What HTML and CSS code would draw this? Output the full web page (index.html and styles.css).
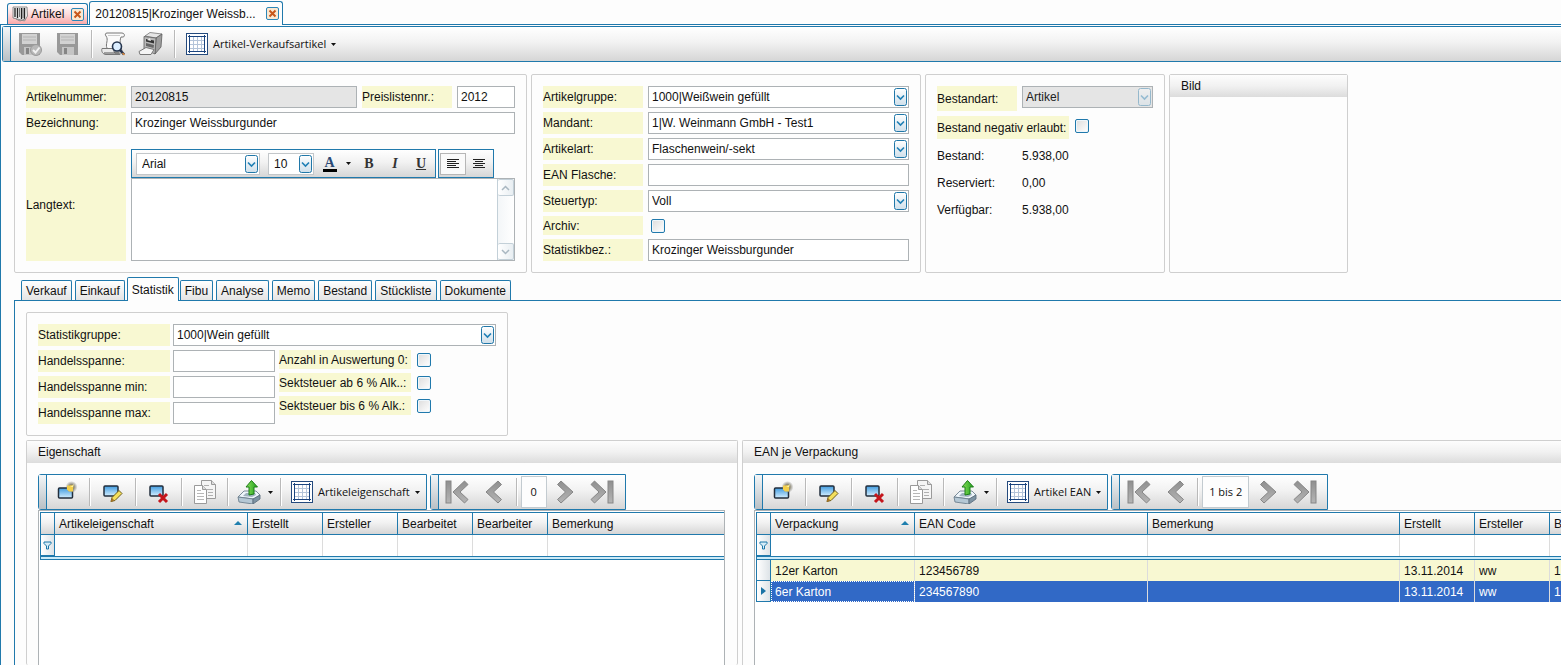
FILE: index.html
```html
<!DOCTYPE html>
<html lang="de">
<head>
<meta charset="utf-8">
<title>Artikel</title>
<link rel="stylesheet" href="styles.css">
</head>
<body>
<svg class="defs" aria-hidden="true">
  <defs>
    <linearGradient id="g-grey" x1="0" y1="0" x2="0" y2="1"><stop offset="0" stop-color="#8f8f8f"/><stop offset="1" stop-color="#b5b5b5"/></linearGradient>
    <linearGradient id="g-blue" x1="0" y1="0" x2="0" y2="1"><stop offset="0" stop-color="#3f9be0"/><stop offset="1" stop-color="#d5efff"/></linearGradient>
    <linearGradient id="g-green" x1="0" y1="0" x2="1" y2="0"><stop offset="0" stop-color="#8be05a"/><stop offset="1" stop-color="#1fa01c"/></linearGradient>
    <linearGradient id="g-btn" x1="0" y1="0" x2="0" y2="1"><stop offset="0" stop-color="#fff"/><stop offset="1" stop-color="#cfdfea"/></linearGradient>
    <radialGradient id="g-glow"><stop offset="0" stop-color="#ffd84a"/><stop offset="0.4" stop-color="#8f8a70"/><stop offset="1" stop-color="#888" stop-opacity="0"/></radialGradient>
  </defs>
  <symbol id="i-drop" viewBox="0 0 13 18"><rect x=".5" y=".5" width="12" height="17" rx="2" fill="url(#g-btn)" stroke="#2077a8"/><path d="M3 7.500l3.500 3.500L10 7.500" fill="none" stroke="#1f7fb5" stroke-width="1.600"/></symbol>
  <symbol id="i-close" viewBox="0 0 13 13"><rect x=".5" y=".5" width="12" height="12" rx="1.500" fill="#fbe9d2" stroke="#2c86b8"/><path d="M3.500 3.500l6 6M9.500 3.500l-6 6" stroke="#c8571a" stroke-width="2"/></symbol>
  <symbol id="i-barcode" viewBox="0 0 16 16"><path d="M1 1h14l.5 9-3 5-3-1L1 12z" fill="#eee" stroke="#777" stroke-width=".8"/><path d="M3 2v9M5.500 2v10M9.500 2v11M12.500 2v11" stroke="#222" stroke-width="1.300"/><path d="M7.500 2v9M11 2v10" stroke="#444" stroke-width=".7"/><path d="M4 13l4 2 5-2" fill="none" stroke="#888"/></symbol>
  <symbol id="i-disk" viewBox="0 0 24 24"><path d="M1 1h21v22H4l-3-3z" fill="#999"/><rect x="4" y="2" width="15" height="10" fill="#d2d2d2"/><path d="M5 5h13M5 8h13" stroke="#b4b4b4"/><rect x="6" y="15" width="12" height="8" fill="#c4c4c4"/><rect x="8" y="16" width="3" height="6" fill="#858585"/></symbol>
  <symbol id="i-diskok" viewBox="0 0 24 24"><use href="#i-disk"/><circle cx="18" cy="18" r="5.500" fill="#b8b8b8" stroke="#9a9a9a"/><path d="M15 18l2.500 2.500 4-5" fill="none" stroke="#f2f2f2" stroke-width="2"/></symbol>
  <symbol id="i-preview" viewBox="0 0 26 24"><path d="M7 1h15c3 0 3 4 1 4h-2c-2 5 0 10 1 14H6l1-3C5 12 9 8 6 4 5 3 5 1 7 1z" fill="#fafafa" stroke="#777"/><path d="M8 3.500h12" stroke="#ccc"/><path d="M2 16.500h12c-1 2 0 3 1 4.500h5v1.500H6c-3 0-5-3-4-6z" fill="#e9e9e9" stroke="#777"/><path d="M4 21h15" stroke="#555"/><circle cx="17" cy="14.500" r="4.500" fill="#dceeff" stroke="#26364f" stroke-width="1.600"/><path d="M20 18l4 4.500" stroke="#24324c" stroke-width="2.600"/><path d="M22.500 21l2 2" stroke="#e08a3c" stroke-width="1.500"/></symbol>
  <symbol id="i-printer" viewBox="0 0 26 24"><path d="M7 4l5-3.500L24 2l-6 4z" fill="#e6e6e6" stroke="#777" stroke-width=".8"/><path d="M18 6l6-4-1 13-6 7z" fill="#9d9d9d" stroke="#5d5d5d" stroke-width=".8"/><path d="M6 4.500L18 6l-1 16-11-5z" fill="#b9b9b9" stroke="#5d5d5d" stroke-width=".8"/><path d="M8 7l8 1.500v3L8 9.500z" fill="#333"/><path d="M8 11l8 2-.5 3L8 14z" fill="#666"/><path d="M9 8l3-2 1 3z" fill="#eee"/><path d="M1 19.500l7-4 8 2-3 5H2z" fill="#f5f5f5" stroke="#777"/></symbol>
  <symbol id="i-table" viewBox="0 0 22 22"><rect x=".5" y=".5" width="21" height="21" fill="#fff" stroke="#244a7d"/><path d="M7.500 3v16M11.500 3v16M15.500 3v16M3 7.500h16M3 11.500h16M3 15.500h16" stroke="#b4c4d9"/><path d="M3.500 2v18M18.500 2v18M2 3.500h18M2 18.500h18" stroke="#1b447e"/></symbol>
  <symbol id="i-new" viewBox="0 0 24 24"><rect x="2.500" y="8" width="14" height="10" rx="1" fill="url(#g-blue)" stroke="#222e3c" stroke-width="1.500"/><circle cx="15.500" cy="7" r="6" fill="url(#g-glow)"/><path d="M11 5.500h6v6h-4l-2-2z" fill="#f3cf4b"/><path d="M14 7l2-1 2-2-1 3" fill="#fff3a0"/></symbol>
  <symbol id="i-edit" viewBox="0 0 24 24"><rect x="3" y="6" width="14" height="10" rx="1" fill="url(#g-blue)" stroke="#222e3c" stroke-width="1.500"/><path d="M10 21.500l1-4 7-7 3 3-7 7z" fill="#f4df5b" stroke="#6a5b1c"/><path d="M9.500 22l1.500-4 2.500 2.500z" fill="#a67427"/></symbol>
  <symbol id="i-del" viewBox="0 0 24 24"><rect x="3" y="6" width="13" height="10" rx="1" fill="url(#g-blue)" stroke="#222e3c" stroke-width="1.500"/><path d="M12 14l8 8M20 14l-8 8" stroke="#c4161c" stroke-width="3"/></symbol>
  <symbol id="i-copy" viewBox="0 0 24 24"><path d="M8.500 .5h10l4 4v14h-14z" fill="#f5f5f5" stroke="#9a9a9a"/><path d="M18.500 .5v4h4" fill="#ddd" stroke="#9a9a9a"/><path d="M14 9.500h6M15 12.500h5M15 15.500h5M11 5.500h5" stroke="#b0b0b0"/><path d="M1.500 5.500h8l4 4v14h-12z" fill="#fff" stroke="#9a9a9a"/><path d="M9.500 5.500v4h4" fill="#ddd" stroke="#9a9a9a"/><path d="M4 10.500h4M4 13.500h7M4 16.500h7M4 19.500h7" stroke="#b8b8b8"/></symbol>
  <symbol id="i-export" viewBox="0 0 24 24"><path d="M1 17l6-6h12l4 4-6 4z" fill="#eef5fa" stroke="#6d808e" stroke-width=".9"/><path d="M1 17l15 2v5l-14-2z" fill="#b5c8d5" stroke="#6d808e" stroke-width=".9"/><path d="M16 19l7-4v4l-7 5z" fill="#7d93a3" stroke="#5d7180" stroke-width=".9"/><path d="M6 16l3-3h9l1 2-4 2z" fill="#9fb2bf"/><path d="M14.500 .5l6 6.500H17v7l-5 1V7H9z" fill="url(#g-green)" stroke="#1c7c18"/></symbol>
  <symbol id="i-prev" viewBox="0 0 24 24"><path d="M16 1l3.500 3.500-8 7.500 8 7.500L16 23 4 12z" fill="url(#g-grey)" stroke="#868686"/></symbol>
  <symbol id="i-next" viewBox="0 0 24 24"><path d="M8 1L4.500 4.500l8 7.500-8 7.500L8 23l12-11z" fill="url(#g-grey)" stroke="#868686"/></symbol>
  <symbol id="i-first" viewBox="0 0 24 24"><rect x="1" y="1" width="5" height="22" fill="url(#g-grey)" stroke="#868686"/><path d="M19.500 1L23 4.500 15 12l8 7.500-3.500 3.500L8 12z" fill="url(#g-grey)" stroke="#868686"/></symbol>
  <symbol id="i-last" viewBox="0 0 24 24"><rect x="18" y="1" width="5" height="22" fill="url(#g-grey)" stroke="#868686"/><path d="M4.500 1L1 4.500 9 12l-8 7.500L4.500 23 16 12z" fill="url(#g-grey)" stroke="#868686"/></symbol>
  <symbol id="i-caret" viewBox="0 0 5 3"><path d="M0 0h5L2.500 3z" fill="#111"/></symbol>
  <symbol id="i-left" viewBox="0 0 14 12"><path d="M1 1.500h12M1 3.500h9M1 5.500h12M1 7.500h9M1 9.500h12" stroke="#222"/></symbol>
  <symbol id="i-center" viewBox="0 0 14 12"><path d="M1 1.500h12M3 3.500h8M1 5.500h12M3 7.500h8M1 9.500h12" stroke="#222"/></symbol>
  <symbol id="i-filter" viewBox="0 0 9 9"><path d="M1 1h7v1.500L5.500 5v3h-2V5L1 2.500z" fill="#d5ecf8" stroke="#1a76a8"/></symbol>
  <symbol id="i-sort" viewBox="0 0 8 4"><path d="M0 4l4-4 4 4z" fill="#1f7fae"/></symbol>
  <symbol id="i-row" viewBox="0 0 5 8"><path d="M0 0l5 4-5 4z" fill="#1b74a6"/></symbol>
  <symbol id="i-up" viewBox="0 0 9 6"><path d="M1 5l3.500-3.500L8 5" fill="none" stroke="#a9b7c1" stroke-width="1.500"/></symbol>
  <symbol id="i-down" viewBox="0 0 9 6"><path d="M1 1l3.500 3.500L8 1" fill="none" stroke="#a9b7c1" stroke-width="1.500"/></symbol>
</svg>

<div class="app">
  <nav class="doctabs">
    <div class="doctab doctab-red"><svg class="ic16"><use href="#i-barcode"/></svg><span>Artikel</span><button class="close" aria-label="Artikel schließen"><svg class="ic13"><use href="#i-close"/></svg></button></div>
    <div class="doctab doctab-active"><span>20120815|Krozinger Weissb...</span><button class="close" aria-label="Dokument schließen"><svg class="ic13"><use href="#i-close"/></svg></button></div>
  </nav>

  <main class="page">
    <div class="toolbar toolbar-main">
      <span class="grip"></span>
      <button class="tb" aria-label="Speichern und schließen"><svg class="ic24"><use href="#i-diskok"/></svg></button>
      <button class="tb" aria-label="Speichern"><svg class="ic24"><use href="#i-disk"/></svg></button>
      <span class="sep"></span>
      <button class="tb" aria-label="Vorschau"><svg class="ic26"><use href="#i-preview"/></svg></button>
      <button class="tb" aria-label="Drucken"><svg class="ic26"><use href="#i-printer"/></svg></button>
      <span class="sep"></span>
      <button class="tb-text"><svg class="ic22"><use href="#i-table"/></svg><span>Artikel-Verkaufsartikel</span><svg class="caret"><use href="#i-caret"/></svg></button>
    </div>

    <div class="panels">
      <section class="panel base">
        <div class="line">
          <label class="lab" for="nr">Artikelnummer:</label>
          <input class="field readonly grow" id="nr" value="20120815" readonly>
          <label class="lab lab-price" for="pl">Preislistennr.:</label>
          <input class="field price" id="pl" value="2012">
        </div>
        <div class="line">
          <label class="lab" for="bez">Bezeichnung:</label>
          <input class="field grow" id="bez" value="Krozinger Weissburgunder">
        </div>
        <div class="line editor-line">
          <label class="lab lab-tall" for="lang">Langtext:</label>
          <div class="editor">
            <div class="edbars">
              <div class="edbar">
                <span class="combo font"><select class="field" aria-label="Schriftart"><option>Arial</option></select><svg class="drop"><use href="#i-drop"/></svg></span>
                <span class="combo size"><select class="field" aria-label="Schriftgröße"><option>10</option></select><svg class="drop"><use href="#i-drop"/></svg></span>
                <button class="ed color" aria-label="Schriftfarbe"><span class="swatch">A</span><svg class="caret"><use href="#i-caret"/></svg></button>
                <button class="ed bold">B</button>
                <button class="ed italic">I</button>
                <button class="ed under">U</button>
              </div>
              <div class="edbar">
                <button class="ed al on" aria-label="Linksbündig"><svg class="align"><use href="#i-left"/></svg></button>
                <button class="ed al" aria-label="Zentriert"><svg class="align"><use href="#i-center"/></svg></button>
              </div>
            </div>
            <div class="edbody">
              <textarea id="lang"></textarea>
              <div class="scroll"><span class="sbtn"><svg class="arr"><use href="#i-up"/></svg></span><span class="sbtn"><svg class="arr"><use href="#i-down"/></svg></span></div>
            </div>
          </div>
        </div>
      </section>

      <section class="panel group">
        <label class="lab" for="ag">Artikelgruppe:</label>
        <span class="combo"><select class="field" id="ag"><option>1000|Weißwein gefüllt</option></select><svg class="drop"><use href="#i-drop"/></svg></span>
        <label class="lab" for="ma">Mandant:</label>
        <span class="combo"><select class="field" id="ma"><option>1|W. Weinmann GmbH - Test1</option></select><svg class="drop"><use href="#i-drop"/></svg></span>
        <label class="lab" for="aa">Artikelart:</label>
        <span class="combo"><select class="field" id="aa"><option>Flaschenwein/-sekt</option></select><svg class="drop"><use href="#i-drop"/></svg></span>
        <label class="lab" for="ean">EAN Flasche:</label>
        <input class="field" id="ean">
        <label class="lab" for="st">Steuertyp:</label>
        <span class="combo"><select class="field" id="st"><option>Voll</option></select><svg class="drop"><use href="#i-drop"/></svg></span>
        <label class="lab lab-low" for="ar">Archiv:</label>
        <input class="check indent" type="checkbox" id="ar">
        <label class="lab" for="sb">Statistikbez.:</label>
        <input class="field" id="sb" value="Krozinger Weissburgunder">
      </section>

      <section class="panel stock">
        <div class="stock-line">
          <label class="lab lab-stock" for="ba">Bestandart:</label>
          <span class="combo off grow"><select class="field" id="ba" disabled><option>Artikel</option></select><svg class="drop"><use href="#i-drop"/></svg></span>
        </div>
        <div class="stock-line">
          <label class="lab lab-neg" for="bn">Bestand negativ erlaubt:</label>
          <input class="check neg" type="checkbox" id="bn">
        </div>
        <dl class="values">
          <dt>Bestand:</dt><dd>5.938,00</dd>
          <dt>Reserviert:</dt><dd>0,00</dd>
          <dt>Verfügbar:</dt><dd>5.938,00</dd>
        </dl>
      </section>

      <section class="panel picture">
        <h2 class="head">Bild</h2>
      </section>
    </div>

    <nav class="tabs">
      <button class="tab">Verkauf</button>
      <button class="tab">Einkauf</button>
      <button class="tab tab-active">Statistik</button>
      <button class="tab">Fibu</button>
      <button class="tab">Analyse</button>
      <button class="tab">Memo</button>
      <button class="tab">Bestand</button>
      <button class="tab">Stückliste</button>
      <button class="tab">Dokumente</button>
    </nav>

    <div class="tabpage">
      <section class="panel stat">
        <div class="line">
          <label class="lab lab-stat" for="sg">Statistikgruppe:</label>
          <span class="combo grow"><select class="field" id="sg"><option>1000|Wein gefüllt</option></select><svg class="drop"><use href="#i-drop"/></svg></span>
        </div>
        <div class="stat-cols">
          <div class="margins">
            <label class="lab" for="h1">Handelsspanne:</label><input class="field" id="h1">
            <label class="lab" for="h2">Handelsspanne min:</label><input class="field" id="h2">
            <label class="lab" for="h3">Handelsspanne max:</label><input class="field" id="h3">
          </div>
          <div class="flags">
            <label class="lab" for="c1">Anzahl in Auswertung 0:</label><input class="check" type="checkbox" id="c1">
            <label class="lab" for="c2">Sektsteuer ab 6 % Alk..:</label><input class="check" type="checkbox" id="c2">
            <label class="lab" for="c3">Sektsteuer bis 6 % Alk.:</label><input class="check" type="checkbox" id="c3">
          </div>
        </div>
      </section>

      <div class="lists">
        <section class="panel list">
          <h2 class="head">Eigenschaft</h2>
          <div class="listbody">
            <div class="bars">
              <div class="toolbar">
                <span class="grip"></span>
                <button class="tb wide lead" aria-label="Neu"><svg class="ic24"><use href="#i-new"/></svg></button><span class="sep"></span>
                <button class="tb wide" aria-label="Bearbeiten"><svg class="ic24"><use href="#i-edit"/></svg></button><span class="sep"></span>
                <button class="tb wide" aria-label="Löschen"><svg class="ic24"><use href="#i-del"/></svg></button><span class="sep"></span>
                <button class="tb wide" aria-label="Kopieren"><svg class="ic24"><use href="#i-copy"/></svg></button><span class="sep"></span>
                <button class="tb export" aria-label="Export"><svg class="ic24"><use href="#i-export"/></svg><svg class="caret"><use href="#i-caret"/></svg></button><span class="sep"></span>
                <button class="tb-text"><svg class="ic22"><use href="#i-table"/></svg><span>Artikeleigenschaft</span><svg class="caret"><use href="#i-caret"/></svg></button>
              </div>
              <div class="toolbar pager">
                <span class="grip"></span>
                <button class="nav" aria-label="Erster"><svg class="ic24"><use href="#i-first"/></svg></button>
                <button class="nav" aria-label="Zurück"><svg class="ic24"><use href="#i-prev"/></svg></button>
                <span class="sep"></span>
                <output class="count">0</output>
                <button class="nav" aria-label="Weiter"><svg class="ic24"><use href="#i-next"/></svg></button>
                <button class="nav" aria-label="Letzter"><svg class="ic24"><use href="#i-last"/></svg></button>
              </div>
            </div>
            <div class="gridbox">
              <table class="grid">
                <colgroup><col class="c-sel"><col class="c-prop"><col class="c-s"><col class="c-s"><col class="c-s"><col class="c-s"><col></colgroup>
                <thead>
                  <tr><th></th><th>Artikeleigenschaft<svg class="sort"><use href="#i-sort"/></svg></th><th>Erstellt</th><th>Ersteller</th><th>Bearbeitet</th><th>Bearbeiter</th><th>Bemerkung</th></tr>
                  <tr class="filter"><td class="sel"><svg class="ic9"><use href="#i-filter"/></svg></td><td></td><td></td><td></td><td></td><td></td><td></td></tr>
                  <tr class="rule"><td colspan="7"></td></tr>
                </thead>
              </table>
            </div>
          </div>
        </section>

        <section class="panel list list-open">
          <h2 class="head">EAN je Verpackung</h2>
          <div class="listbody">
            <div class="bars">
              <div class="toolbar">
                <span class="grip"></span>
                <button class="tb wide lead" aria-label="Neu"><svg class="ic24"><use href="#i-new"/></svg></button><span class="sep"></span>
                <button class="tb wide" aria-label="Bearbeiten"><svg class="ic24"><use href="#i-edit"/></svg></button><span class="sep"></span>
                <button class="tb wide" aria-label="Löschen"><svg class="ic24"><use href="#i-del"/></svg></button><span class="sep"></span>
                <button class="tb wide" aria-label="Kopieren"><svg class="ic24"><use href="#i-copy"/></svg></button><span class="sep"></span>
                <button class="tb export" aria-label="Export"><svg class="ic24"><use href="#i-export"/></svg><svg class="caret"><use href="#i-caret"/></svg></button><span class="sep"></span>
                <button class="tb-text"><svg class="ic22"><use href="#i-table"/></svg><span>Artikel EAN</span><svg class="caret"><use href="#i-caret"/></svg></button>
              </div>
              <div class="toolbar pager">
                <span class="grip"></span>
                <button class="nav" aria-label="Erster"><svg class="ic24"><use href="#i-first"/></svg></button>
                <button class="nav" aria-label="Zurück"><svg class="ic24"><use href="#i-prev"/></svg></button>
                <span class="sep"></span>
                <output class="count">1 bis 2</output>
                <button class="nav" aria-label="Weiter"><svg class="ic24"><use href="#i-next"/></svg></button>
                <button class="nav" aria-label="Letzter"><svg class="ic24"><use href="#i-last"/></svg></button>
              </div>
            </div>
            <div class="gridbox">
              <table class="grid">
                <colgroup><col class="c-sel"><col class="c-pack"><col class="c-ean"><col class="c-note"><col class="c-s"><col class="c-s"><col></colgroup>
                <thead>
                  <tr><th></th><th>Verpackung<svg class="sort"><use href="#i-sort"/></svg></th><th>EAN Code</th><th>Bemerkung</th><th>Erstellt</th><th>Ersteller</th><th>B</th></tr>
                  <tr class="filter"><td class="sel"><svg class="ic9"><use href="#i-filter"/></svg></td><td></td><td></td><td></td><td></td><td></td><td></td></tr>
                  <tr class="rule"><td colspan="7"></td></tr>
                </thead>
                <tbody>
                  <tr class="odd"><td class="sel"></td><td>12er Karton</td><td>123456789</td><td></td><td>13.11.2014</td><td>ww</td><td>1</td></tr>
                  <tr class="current"><td class="sel"><svg class="rowmark"><use href="#i-row"/></svg></td><td class="focus">6er Karton</td><td>234567890</td><td></td><td>13.11.2014</td><td>ww</td><td>1</td></tr>
                </tbody>
              </table>
            </div>
          </div>
        </section>
      </div>
    </div>
  </main>
</div>
</body>
</html>
```
FILE: styles.css
```css
:root {
  --blue: #2079ac;
  --line: #cfcfcf;
  --field: #adb2b5;
  --yellow: #f8f8d2;
  --bar: linear-gradient(#ffffff, #f2f2f2 45%, #d6d6d6);
  --ui: "Open Sans", "Noto Sans", sans-serif;
}

* { box-sizing: border-box; }

body {
  margin: 0;
  background: #fdfdfd;
  color: #111;
  font: 12px/16px "Liberation Sans", Arial, sans-serif;
  overflow: hidden;
}

button, input, select, textarea { font: inherit; color: inherit; margin: 0; }
button { background: none; border: 0; padding: 0; }
svg { display: block; flex: none; }
.defs { position: absolute; width: 0; height: 0; }
.grow { flex: 1; min-width: 0; }

.ic9 { width: 9px; height: 9px; }
.ic13 { width: 13px; height: 13px; }
.ic16 { width: 16px; height: 16px; }
.ic22 { width: 22px; height: 22px; }
.ic24 { width: 24px; height: 24px; }
.ic26 { width: 26px; height: 24px; }
.caret { width: 5px; height: 3px; }

.app { display: flex; flex-direction: column; height: 100vh; }

/* document tabs */
.doctabs { display: flex; align-items: flex-end; gap: 1px; height: 24px; padding-left: 7px; }
.doctab {
  display: flex; align-items: center; gap: 10px;
  height: 21px; padding: 0 3px 0 5px;
  border: 1px solid var(--blue); border-bottom: 0; border-radius: 3px 3px 0 0;
}
.doctab-red { gap: 3px; padding: 0 3px 0 4px; background: linear-gradient(#fff, #ffdcdc 50%, #f9a9a9); }
.doctab-red .close { margin-left: 4px; }
.doctab-active { position: relative; height: 24px; margin-bottom: -1px; background: #fdfdfd; }

.page {
  flex: 1; min-height: 0;
  display: flex; flex-direction: column;
  border-top: 1px solid var(--blue);
  border-left: 1px solid var(--blue);
}

/* toolbars */
.toolbar {
  display: flex; align-items: center;
  height: 36px;
  border: 1px solid var(--blue); border-radius: 3px 0 0 3px;
  background: var(--bar);
}
.toolbar-main { margin: 1px 0 12px 1px; border-right: 0; }
.toolbar-main .sep { margin: 0 1px 0 4px; }
.grip {
  width: 8px; align-self: stretch;
  border-right: 1px solid var(--blue);
  background: linear-gradient(#f3f6f8, #b9c0c5);
}
.sep { width: 2px; height: 28px; background: #b9b9b9; border-right: 1px solid #fff; }
.tb { display: flex; align-items: center; justify-content: center; width: 38px; height: 34px; }
.wide { width: 44px; }
.lead { width: 42px; }
.export { width: 51px; gap: 7px; }
.tb-text { display: flex; align-items: center; gap: 5px; padding: 0 6px 0 9px; font-family: var(--ui); font-size: 11px; white-space: nowrap; }

/* panels */
.panels { display: flex; gap: 4px; padding-left: 13px; }
.panel { border: 1px solid var(--line); border-radius: 2px; }
.base, .group, .stock, .stat { padding: 11px; }
.base { flex: none; width: 513px; }
.group { flex: none; display: grid; grid-template-columns: 100px 261px; gap: 4px 5px; align-items: center; }
.stock { flex: none; width: 240px; }
.picture { flex: none; width: 179px; }
.head {
  height: 22px; margin: 0; padding-left: 11px;
  font-size: 12px; font-weight: normal; line-height: 22px;
  background: linear-gradient(#fdfdfd, #f1f1f1 50%, #dcdcdc);
}

.line { display: flex; gap: 5px; margin-bottom: 4px; }
.lab { display: flex; align-items: center; flex: none; width: 100px; height: 22px; background: var(--yellow); white-space: nowrap; }
.lab-price { width: 90px; }
.field {
  width: 100%; height: 22px; padding: 0 3px;
  border: 1px solid var(--field); border-radius: 0;
  background: #fff; outline: 0; appearance: none;
}
.line .price { width: 58px; }
.readonly { background: #e5e5e5; }
.combo { position: relative; display: flex; }
.combo .drop { position: absolute; right: 2px; top: 2px; width: 13px; height: 18px; pointer-events: none; }
.off .field { background: #e5e5e5; opacity: 1; color: #222; }
.off .drop { opacity: .4; }

.check {
  appearance: none; flex: none; width: 14px; height: 14px;
  border: 1px solid var(--blue); border-radius: 2px;
  background: linear-gradient(135deg, #dcdcdc, #fff);
  box-shadow: inset 0 0 0 1px #eef6fb;
}
.indent { margin-left: 3px; }
.lab-low { height: 19px; }

/* rich text editor */
.editor-line { margin: 15px 0 0; }
.lab-tall { height: 112px; }
.editor { flex: 1; min-width: 0; }
.edbars { display: flex; gap: 2px; }
.edbar { display: flex; align-items: center; height: 29px; padding: 0 1px; border: 1px solid var(--blue); background: var(--bar); }
.font { width: 124px; margin-left: 3px; }
.size { width: 46px; margin-left: 8px; }
.edbar .field { padding-left: 5px; border-color: #c3c7ca; }
.ed { display: flex; align-items: center; justify-content: center; width: 26px; height: 22px; font: bold 14px/16px "Liberation Serif", serif; color: #333; }
.color { width: 42px; gap: 9px; padding-left: 3px; }
.swatch { width: 14px; height: 16px; line-height: 13px; border-bottom: 3px solid #000; color: #2b4a75; }
.italic { font-style: italic; }
.under { text-decoration: underline; }
.on { border: 1px solid #b6b6b6; background: #fafafa; }
.align { width: 14px; height: 12px; }
.edbody { display: flex; height: 83px; border: 1px solid var(--field); background: #fff; }
.edbody textarea { flex: 1; border: 0; padding: 3px; resize: none; outline: 0; background: none; overflow: hidden; }
.scroll { display: flex; flex-direction: column; justify-content: space-between; width: 17px; border-left: 1px solid #c3d0d8; background: linear-gradient(90deg, #f3f6f8, #fff); }
.sbtn { display: flex; align-items: center; justify-content: center; height: 17px; border: 1px solid #c3d0d8; border-left: 0; border-radius: 2px; background: linear-gradient(90deg, #fff, #e8eef2); }
.arr { width: 9px; height: 6px; }

/* stock */
.stock-line { display: flex; gap: 5px; margin-bottom: 5px; }
.lab-stock { width: 80px; height: 25px; }
.lab-neg { width: 132px; height: 23px; }
.neg { margin: 3px 0 0 1px; }
.values { display: grid; grid-template-columns: 80px 1fr; gap: 11px 5px; margin: 9px 0 0; }
.values dd { margin: 0; }

/* inner tabs */
.tabs { display: flex; align-items: flex-end; gap: 3px; height: 27px; padding-left: 20px; }
.tab {
  height: 20px; padding: 0 4px;
  border: 1px solid var(--blue); border-bottom: 0; border-radius: 2px 2px 0 0;
  background: linear-gradient(#fff, #e4e4e4);
}
.tab-active { position: relative; height: 24px; margin: 0 -2px -1px -1px; background: #fdfdfd; }
.tabpage {
  flex: 1; min-height: 0;
  display: flex; flex-direction: column; gap: 4px;
  margin-left: 13px; padding: 11px 0 0 11px;
  border-top: 1px solid var(--blue); border-left: 1px solid var(--blue);
}
.stat { align-self: flex-start; width: 482px; }
.stat .line { gap: 3px; }
.lab-stat { width: 132px; }
.stat-cols { display: flex; gap: 4px; }
.margins { display: grid; grid-template-columns: 132px 102px; gap: 4px 3px; }
.margins .lab { width: auto; }
.flags { display: grid; grid-template-columns: 132px 14px; gap: 4px 6px; align-content: start; align-items: center; }
.flags .lab { width: auto; height: 19px; }

/* lists */
.lists { flex: 1; min-height: 0; display: grid; grid-template-columns: minmax(0, 20fr) minmax(0, 23fr); gap: 4px; }
.list { display: flex; flex-direction: column; min-width: 0; border-bottom: 0; }
.list-open { border-right: 0; border-radius: 2px 0 0 0; }
.listbody { flex: 1; display: flex; flex-direction: column; padding: 11px 12px 0 11px; }
.list-open .listbody { padding-right: 0; }
.bars { display: flex; gap: 3px; }
.pager { padding-right: 4px; }
.pager .sep { margin-left: 3px; }
.nav { display: flex; align-items: center; justify-content: center; width: 37px; height: 34px; }
.count {
  display: flex; align-items: center; justify-content: center;
  min-width: 26px; height: 32px; margin-left: 3px; padding: 0 6px;
  border: 1px solid #c3cbd0; background: #fdfdfd;
  font-family: var(--ui); font-size: 11px; white-space: nowrap;
}
.gridbox { flex: 1; padding: 1px 0 0 1px; border: 1px solid var(--field); border-bottom: 0; background: #fff; overflow: hidden; }
.list-open .gridbox { border-right: 0; }

.grid { width: 100%; table-layout: fixed; border-collapse: separate; border-spacing: 0; }
.c-sel { width: 15px; }
.c-prop { width: 193px; }
.c-s { width: 75px; }
.c-pack { width: 144px; }
.c-ean { width: 233px; }
.c-note { width: 252px; }
.grid th, .grid td { padding: 0 4px; font-weight: normal; text-align: left; white-space: nowrap; overflow: hidden; }
.grid th { position: relative; height: 23px; border: 1px solid var(--blue); border-left: 0; background: var(--bar); }
.grid th:first-child { border-left: 1px solid var(--blue); }
.grid th:last-child, .grid td:last-child { border-right: 0; }
.sort { position: absolute; right: 5px; top: 8px; width: 8px; height: 4px; }
.grid td { height: 21px; border-right: 1px solid #dcdcdc; }
.grid .sel { padding: 0 0 0 2px; border: 1px solid var(--blue); border-top: 0; background: linear-gradient(90deg, #fff, #dde3e7); }
.rowmark { width: 5px; height: 8px; margin-left: 2px; }
.grid .rule td { height: 4px; padding: 0; border: 1px solid var(--blue); border-right: 0; background: #cdebf8; }
.odd td { background: var(--yellow); }
.current td { background: #3169c6; color: #fff; }
.grid .focus { outline: 1px dotted #fff; outline-offset: -1px; }
```
